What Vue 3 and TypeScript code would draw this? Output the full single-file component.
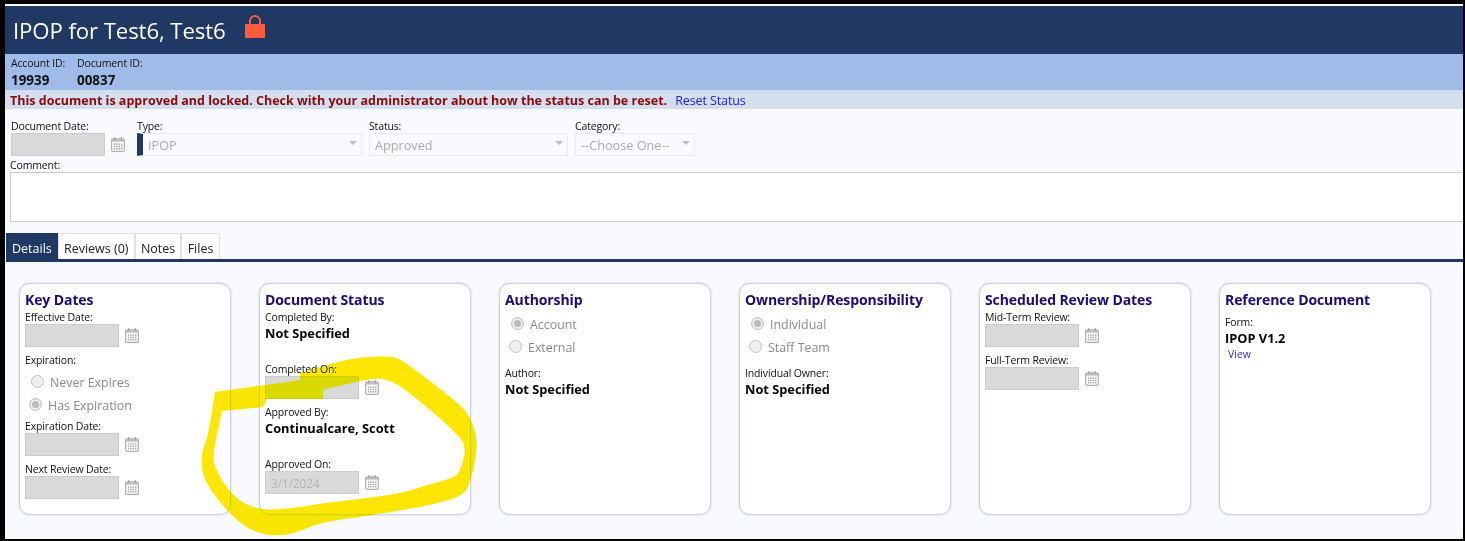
<script setup lang="ts">
type Field =
  | { kind: 'date'; label: string; value?: string }
  | { kind: 'text'; label: string; value: string }
  | { kind: 'radios'; label?: string; options: { text: string; on: boolean }[] }
  | { kind: 'form'; label: string; value: string; link: string }

interface Card {
  title: string
  fields: Field[]
}

const cards: Card[] = [
  {
    title: 'Key Dates',
    fields: [
      { kind: 'date', label: 'Effective Date:' },
      {
        kind: 'radios',
        label: 'Expiration:',
        options: [
          { text: 'Never Expires', on: false },
          { text: 'Has Expiration', on: true },
        ],
      },
      { kind: 'date', label: 'Expiration Date:' },
      { kind: 'date', label: 'Next Review Date:' },
    ],
  },
  {
    title: 'Document Status',
    fields: [
      { kind: 'text', label: 'Completed By:', value: 'Not Specified' },
      { kind: 'date', label: 'Completed On:' },
      { kind: 'text', label: 'Approved By:', value: 'Continualcare, Scott' },
      { kind: 'date', label: 'Approved On:', value: '3/1/2024' },
    ],
  },
  {
    title: 'Authorship',
    fields: [
      {
        kind: 'radios',
        options: [
          { text: 'Account', on: true },
          { text: 'External', on: false },
        ],
      },
      { kind: 'text', label: 'Author:', value: 'Not Specified' },
    ],
  },
  {
    title: 'Ownership/Responsibility',
    fields: [
      {
        kind: 'radios',
        options: [
          { text: 'Individual', on: true },
          { text: 'Staff Team', on: false },
        ],
      },
      { kind: 'text', label: 'Individual Owner:', value: 'Not Specified' },
    ],
  },
  {
    title: 'Scheduled Review Dates',
    fields: [
      { kind: 'date', label: 'Mid-Term Review:' },
      { kind: 'date', label: 'Full-Term Review:' },
    ],
  },
  {
    title: 'Reference Document',
    fields: [{ kind: 'form', label: 'Form:', value: 'IPOP V1.2', link: 'View' }],
  },
]

const tabs = ['Details', 'Reviews (0)', 'Notes', 'Files']
const selects = [
  { label: 'Type:', value: 'IPOP', cls: 'sel-type' },
  { label: 'Status:', value: 'Approved', cls: 'sel-status' },
  { label: 'Category:', value: '--Choose One--', cls: 'sel-cat' },
]
const calCells = [0, 1, 2, 3].flatMap((c) => [0, 1, 2].map((r) => ({ x: 2.8 + c * 2.4, y: 6.4 + r * 2.3 })))

type Pt = [number, number]
function smooth(pts: Pt[]): string {
  let d = `M${pts[0][0]} ${pts[0][1]}`
  for (let i = 1; i < pts.length - 1; i++) {
    const mx = (pts[i][0] + pts[i + 1][0]) / 2
    const my = (pts[i][1] + pts[i + 1][1]) / 2
    d += ` Q${pts[i][0]} ${pts[i][1]} ${mx} ${my}`
  }
  const last = pts[pts.length - 1]
  return `${d} L${last[0]} ${last[1]}`
}
const outer: Pt[] = [
  [300, 373], [320, 367], [345, 360], [365, 357], [393, 356], [403, 361], [430, 381], [457, 402], [470, 416],
  [477, 437], [476, 457], [469, 487], [460, 497], [427, 506], [390, 512], [360, 517], [323, 522], [300, 531],
  [283, 536], [257, 534], [233, 518], [203, 481], [201, 453], [208, 437], [215, 392],
]
const inner: Pt[] = [
  [323, 390], [358, 381], [380, 378], [393, 382], [403, 388], [427, 407], [453, 430], [467, 446], [460, 472],
  [453, 478], [427, 485], [403, 493], [360, 499], [323, 503], [290, 509], [257, 510], [233, 497], [212, 465],
  [215, 443], [222, 411],
]
const highlight = `${smooth(outer)} L265 385 L300 380 Z ${smooth(inner)} L263 407 L267 399 L323 399 Z`
</script>

<template>
  <div class="frame">
    <div class="page">
      <header class="title-bar">
        <h1>IPOP for Test6, Test6</h1>
        <svg class="lock" width="20" height="23" viewBox="0 0 20 23" aria-hidden="true">
          <path d="M5 10V6a5 5 0 0 1 10 0v4" fill="none" stroke="#ff5c39" stroke-width="2" />
          <rect x="0" y="9" width="20" height="14" rx="1" fill="#ff5c39" />
        </svg>
      </header>

      <section class="id-bar">
        <div class="id-col first">
          <span class="id-label">Account ID:</span>
          <strong>19939</strong>
        </div>
        <div class="id-col">
          <span class="id-label">Document ID:</span>
          <strong>00837</strong>
        </div>
      </section>

      <section class="alert-bar">
        <strong>This document is approved and locked. Check with your administrator about how the status can be reset.</strong>
        <a href="#">Reset Status</a>
      </section>

      <section class="form-row">
        <div class="field">
          <label class="lbl">Document Date:</label>
          <div class="date-line">
            <input class="date-input" disabled />
            <svg class="cal" width="14" height="15" viewBox="0 0 14 15" aria-hidden="true">
              <rect x="0.6" y="1.8" width="12.8" height="12.6" rx="1.6" fill="#fff" stroke="#b0b0b0" stroke-width="1.2" />
              <rect x="1" y="2.2" width="12" height="2.4" fill="#bcbcbc" />
              <rect x="3" y="0.2" width="1.4" height="3" fill="#a8a8a8" />
              <rect x="9.6" y="0.2" width="1.4" height="3" fill="#a8a8a8" />
              <rect v-for="(c, i) in calCells" :key="i" :x="c.x" :y="c.y" width="1.5" height="1.5" fill="#a8a8a8" />
            </svg>
          </div>
        </div>
        <div v-for="s in selects" :key="s.label" class="field" :class="s.cls">
          <label class="lbl">{{ s.label }}</label>
          <div class="select">
            <span>{{ s.value }}</span>
            <i class="caret"></i>
          </div>
        </div>
      </section>

      <section class="comment">
        <label class="lbl">Comment:</label>
        <textarea disabled></textarea>
      </section>

      <nav class="tabs">
        <button v-for="(t, i) in tabs" :key="t" class="tab" :class="{ active: i === 0 }">{{ t }}</button>
      </nav>

      <main class="cards">
        <article v-for="card in cards" :key="card.title" class="card">
          <h2>{{ card.title }}</h2>
          <template v-for="(f, i) in card.fields" :key="i">
            <div v-if="f.kind === 'date'" class="block-date">
              <label class="lbl">{{ f.label }}</label>
              <div class="date-line">
                <input class="date-input" :value="f.value" disabled />
                <svg class="cal" width="14" height="15" viewBox="0 0 14 15" aria-hidden="true">
                  <rect x="0.6" y="1.8" width="12.8" height="12.6" rx="1.6" fill="#fff" stroke="#b0b0b0" stroke-width="1.2" />
                  <rect x="1" y="2.2" width="12" height="2.4" fill="#bcbcbc" />
                  <rect x="3" y="0.2" width="1.4" height="3" fill="#a8a8a8" />
                  <rect x="9.6" y="0.2" width="1.4" height="3" fill="#a8a8a8" />
                  <rect v-for="(c, j) in calCells" :key="j" :x="c.x" :y="c.y" width="1.5" height="1.5" fill="#a8a8a8" />
                </svg>
              </div>
            </div>
            <div v-else-if="f.kind === 'text'" class="block-text">
              <label class="lbl">{{ f.label }}</label>
              <div class="val">{{ f.value }}</div>
            </div>
            <div v-else-if="f.kind === 'radios'" class="block-radios">
              <label v-if="f.label" class="lbl">{{ f.label }}</label>
              <div class="radio-list" :class="{ plain: !f.label }">
                <div v-for="(o, k) in f.options" :key="o.text" class="radio" :class="{ first: k === 0 }">
                  <span class="dot" :class="{ on: o.on }"></span>
                  <span>{{ o.text }}</span>
                </div>
              </div>
            </div>
            <div v-else class="block-form">
              <label class="lbl">{{ f.label }}</label>
              <div class="val">{{ f.value }}</div>
              <a href="#" class="view">{{ f.link }}</a>
            </div>
          </template>
        </article>
      </main>
    </div>

    <svg class="marker" width="1465" height="541" viewBox="0 0 1465 541" aria-hidden="true">
      <path :d="highlight" fill="#ffe600" fill-rule="evenodd" />
    </svg>
  </div>
</template>

<style>
html,
body {
  margin: 0;
  background: #000;
}
</style>

<style scoped>
.frame {
  box-sizing: border-box;
  width: 1465px;
  height: 541px;
  padding: 4px 2px 2px 5px;
  background: #000;
  overflow: hidden;
  position: relative;
  font-family: 'Open Sans', 'Noto Sans', sans-serif;
  color: #111;
}
.page {
  box-sizing: border-box;
  height: 100%;
  border-top: 2px solid #fff;
  background: #f8faff;
  overflow: hidden;
}
.title-bar {
  height: 48px;
  background: #1f3864;
  display: flex;
  align-items: center;
  padding-left: 8px;
  color: #fff;
}
.title-bar h1 {
  margin: 0;
  font-size: 22.2px;
  font-weight: 400;
  letter-spacing: -0.1px;
}
.lock {
  margin-left: 19px;
  margin-top: -7px;
}
.id-bar {
  height: 36px;
  background: #9fbbe8;
  display: flex;
  padding-left: 6px;
  box-sizing: border-box;
  padding-top: 2px;
}
.id-col {
  display: flex;
  flex-direction: column;
}
.id-col.first {
  width: 66px;
}
.id-label {
  font-size: 10.5px;
  line-height: 15px;
  letter-spacing: -0.15px;
}
.id-col strong {
  font-size: 13.4px;
  line-height: 18px;
}
.alert-bar {
  box-sizing: border-box;
  height: 19px;
  background: #d3deef;
  display: flex;
  align-items: center;
  padding: 1px 0 0 5px;
  gap: 8px;
  font-size: 12.5px;
  white-space: nowrap;
}
.alert-bar strong {
  color: #8b0a0a;
}
.alert-bar a {
  color: #2222dd;
  text-decoration: none;
  letter-spacing: -0.1px;
}
.form-row {
  display: flex;
  padding: 10px 0 0 6px;
}
.lbl {
  display: block;
  font-size: 10.5px;
  line-height: 14px;
  letter-spacing: -0.15px;
  white-space: nowrap;
}
.date-line {
  display: flex;
  align-items: center;
  gap: 6px;
}
.date-input {
  box-sizing: border-box;
  width: 94px;
  height: 23px;
  border: 1px solid #ccc;
  background: #d9d9d9;
  padding: 0 5px;
  font: inherit;
  font-size: 11.7px;
  color: #b3b3b3;
  margin: 0;
}
.cal {
  flex: none;
}
.select {
  box-sizing: border-box;
  height: 23px;
  border: 1px solid #e8eaf0;
  background: #f9fafe;
  display: flex;
  align-items: center;
  justify-content: space-between;
  padding: 1px 4px 0 5px;
  font-size: 12.7px;
  color: #adadad;
}
.caret {
  width: 0;
  height: 0;
  border-left: 4px solid transparent;
  border-right: 4px solid transparent;
  border-top: 4px solid #bdbdbd;
  margin-top: -4px;
}
.sel-type {
  margin-left: 12px;
  width: 225px;
}
.sel-type .select {
  border-left: 6px solid #1f3864;
}
.sel-status {
  margin-left: 7px;
  width: 199px;
}
.sel-cat {
  margin-left: 7px;
  width: 120px;
}
.comment {
  padding: 2px 0 0 5px;
}
.comment textarea {
  display: block;
  box-sizing: border-box;
  width: 100%;
  height: 50px;
  margin: 0;
  border: 1px solid #ccc;
  border-right: 0;
  background: #fff;
  resize: none;
}
.tabs {
  display: flex;
  margin: 11px 0 0 1px;
  height: 29px;
  box-sizing: border-box;
  border-bottom: 3px solid #1f3864;
}
.tab {
  height: 26px;
  box-sizing: border-box;
  border: 1px solid #e2e2e2;
  border-bottom: 0;
  background: #fff;
  margin: 0;
  padding: 3px 5.2px 0;
  font: inherit;
  font-size: 12.5px;
  color: #222;
}
.tab.active {
  background: #1f3864;
  border-color: #1f3864;
  color: #fff;
  padding: 3px 5px 0;
}
.cards {
  display: flex;
  gap: 28px;
  padding: 21px 0 0 14px;
}
.card {
  box-sizing: border-box;
  width: 212px;
  height: 232px;
  flex: none;
  background: #fff;
  border: 1px solid #cfd5e6;
  border-radius: 11px;
  box-shadow: 0 0 2px #bcc4dc;
  padding: 6px 5px 0;
}
.card h2 {
  margin: 0;
  font-size: 14px;
  line-height: 20px;
  font-weight: 700;
  color: #1a0a80;
  letter-spacing: -0.1px;
  white-space: nowrap;
}
.block-date {
  margin-bottom: 6px;
}
.block-text {
  margin-bottom: 20px;
}
.val {
  font-size: 12.8px;
  line-height: 17px;
  padding-top: 1px;
  font-weight: 700;
  color: #000;
  white-space: nowrap;
}
.radio-list {
  padding: 4px 0 2px 4px;
}
.radio-list.plain {
  padding: 3px 0 7px 4px;
}
.radio {
  height: 23px;
  display: flex;
  align-items: center;
  gap: 6px;
  font-size: 12.4px;
  color: #8a8a8f;
}
.radio.first {
  margin-left: 2px;
}
.dot {
  box-sizing: border-box;
  width: 13px;
  height: 13px;
  border-radius: 50%;
  border: 1px solid #c4c4c4;
  background: #f0f0f0;
  flex: none;
  margin-top: -3px;
}
.dot.on {
  background: #bbb;
  box-shadow: inset 0 0 0 2px #eee;
}
.block-form {
  padding-top: 5px;
}
.view {
  display: block;
  font-size: 10.5px;
  line-height: 14px;
  color: #3a2ad8;
  text-decoration: none;
  padding-left: 3px;
}
.marker {
  position: absolute;
  left: 0;
  top: 0;
  pointer-events: none;
  mix-blend-mode: darken;
}
</style>
